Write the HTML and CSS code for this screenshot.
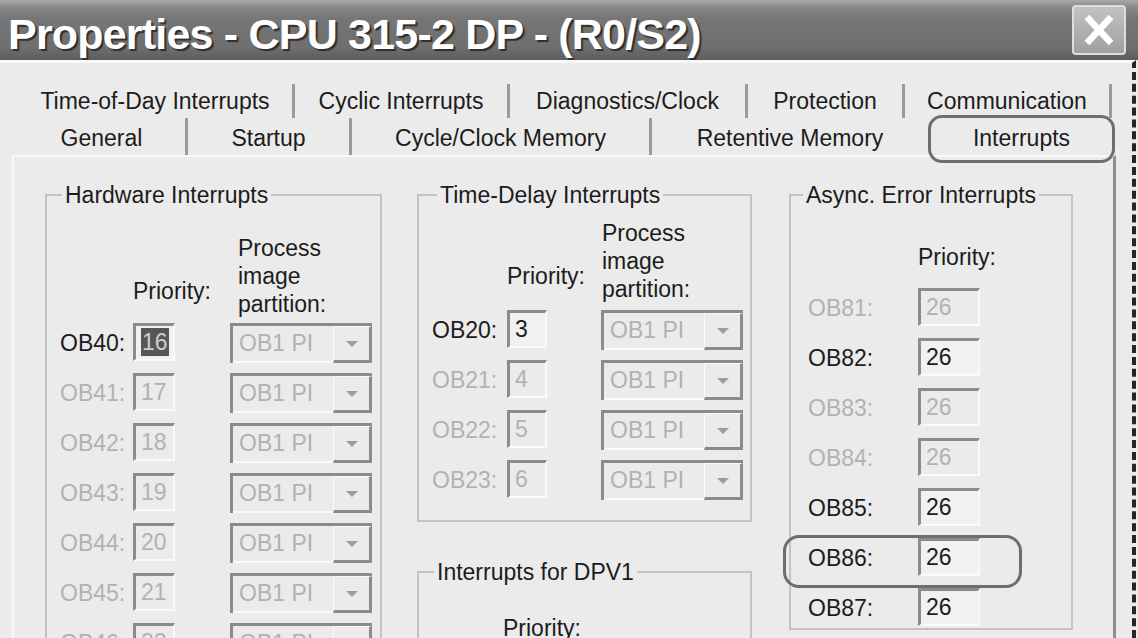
FILE: index.html
```html
<!DOCTYPE html>
<html lang="en">
<head>
  <meta charset="UTF-8" />
  <title>Properties - CPU 315-2 DP - (R0/S2)</title>
  <link rel="stylesheet" href="styles.css">
</head>
<body>
  <div id="window">
    <div id="titlebar">
      <h1>Properties - CPU 315-2 DP - (R0/S2)</h1>
      <button id="close-btn" aria-label="Close">
        <svg viewBox="0 0 30 32" width="30" height="32">
          <path d="M3 3 L27 29 M27 3 L3 29" stroke="#fff" stroke-width="6.5" fill="none" />
        </svg>
      </button>
    </div>

    <div id="client">
      <div class="tab-row back">
        <div class="tab t-tod">Time-of-Day Interrupts</div>
        <div class="tab t-cyclic">Cyclic Interrupts</div>
        <div class="tab t-diag">Diagnostics/Clock</div>
        <div class="tab t-prot">Protection</div>
        <div class="tab t-comm">Communication</div>
      </div>
      <div class="tab-row front">
        <div class="tab t-general">General</div>
        <div class="tab t-startup">Startup</div>
        <div class="tab t-cycle">Cycle/Clock Memory</div>
        <div class="tab t-retentive">Retentive Memory</div>
        <div class="tab t-interrupts active">Interrupts</div>
      </div>

      <div id="panel">
        <!-- left column -->
        <fieldset class="group group-hw">
          <legend>Hardware Interrupts</legend>
          <div class="group-body">
            <div class="head">
              <span class="head-prio">Priority:</span>
              <span class="head-pi">Process<br>image<br>partition:</span>
            </div>
            <div class="ob-row">
              <span class="ob-name">OB40:</span>
              <span class="field"><span class="sel">16</span></span>
              <span class="combo"><span class="combo-text">OB1 PI</span><span class="combo-btn"></span></span>
            </div>
            <div class="ob-row off">
              <span class="ob-name">OB41:</span>
              <span class="field">17</span>
              <span class="combo"><span class="combo-text">OB1 PI</span><span class="combo-btn"></span></span>
            </div>
            <div class="ob-row off">
              <span class="ob-name">OB42:</span>
              <span class="field">18</span>
              <span class="combo"><span class="combo-text">OB1 PI</span><span class="combo-btn"></span></span>
            </div>
            <div class="ob-row off">
              <span class="ob-name">OB43:</span>
              <span class="field">19</span>
              <span class="combo"><span class="combo-text">OB1 PI</span><span class="combo-btn"></span></span>
            </div>
            <div class="ob-row off">
              <span class="ob-name">OB44:</span>
              <span class="field">20</span>
              <span class="combo"><span class="combo-text">OB1 PI</span><span class="combo-btn"></span></span>
            </div>
            <div class="ob-row off">
              <span class="ob-name">OB45:</span>
              <span class="field">21</span>
              <span class="combo"><span class="combo-text">OB1 PI</span><span class="combo-btn"></span></span>
            </div>
            <div class="ob-row off">
              <span class="ob-name">OB46:</span>
              <span class="field">22</span>
              <span class="combo"><span class="combo-text">OB1 PI</span><span class="combo-btn"></span></span>
            </div>
          </div>
        </fieldset>

        <!-- middle column -->
        <div class="col-mid">
          <fieldset class="group group-delay">
            <legend>Time-Delay Interrupts</legend>
            <div class="group-body">
              <div class="head">
                <span class="head-prio">Priority:</span>
                <span class="head-pi">Process<br>image<br>partition:</span>
              </div>
              <div class="ob-row">
                <span class="ob-name">OB20:</span>
                <span class="field">3</span>
                <span class="combo"><span class="combo-text">OB1 PI</span><span class="combo-btn"></span></span>
              </div>
              <div class="ob-row off">
                <span class="ob-name">OB21:</span>
                <span class="field">4</span>
                <span class="combo"><span class="combo-text">OB1 PI</span><span class="combo-btn"></span></span>
              </div>
              <div class="ob-row off">
                <span class="ob-name">OB22:</span>
                <span class="field">5</span>
                <span class="combo"><span class="combo-text">OB1 PI</span><span class="combo-btn"></span></span>
              </div>
              <div class="ob-row off">
                <span class="ob-name">OB23:</span>
                <span class="field">6</span>
                <span class="combo"><span class="combo-text">OB1 PI</span><span class="combo-btn"></span></span>
              </div>
            </div>
          </fieldset>

          <fieldset class="group group-dpv1">
            <legend>Interrupts for DPV1</legend>
            <div class="group-body">
              <div class="head">
                <span class="head-prio">Priority:</span>
              </div>
            </div>
          </fieldset>
        </div>

        <!-- right column -->
        <fieldset class="group group-async">
          <legend>Async. Error Interrupts</legend>
          <div class="group-body">
            <div class="head">
              <span class="head-prio">Priority:</span>
            </div>
            <div class="ob-row off">
              <span class="ob-name">OB81:</span>
              <span class="field">26</span>
            </div>
            <div class="ob-row">
              <span class="ob-name">OB82:</span>
              <span class="field">26</span>
            </div>
            <div class="ob-row off">
              <span class="ob-name">OB83:</span>
              <span class="field">26</span>
            </div>
            <div class="ob-row off">
              <span class="ob-name">OB84:</span>
              <span class="field">26</span>
            </div>
            <div class="ob-row">
              <span class="ob-name">OB85:</span>
              <span class="field">26</span>
            </div>
            <div class="ob-row marked">
              <span class="ob-name">OB86:</span>
              <span class="field">26</span>
            </div>
            <div class="ob-row">
              <span class="ob-name">OB87:</span>
              <span class="field">26</span>
            </div>
          </div>
        </fieldset>
      </div>
    </div>
  </div>
</body>
</html>
```

FILE: styles.css
```css
* {
  box-sizing: border-box;
}

body {
  margin: 0;
  background: #ebebeb;
  color: #1c1c1c;
  font-family: 'Liberation Sans', Arial, sans-serif;
  font-size: 23px;
  overflow: hidden;
}

#window {
  width: 1138px;
  height: 638px;
  display: flex;
  flex-direction: column;
  overflow: hidden;
}

/* title bar */

#titlebar {
  flex: none;
  height: 60px;
  display: flex;
  justify-content: space-between;
  align-items: flex-start;
  background: linear-gradient(#a9a9a9 0, #8a8a8a 7px, #767676 18px, #6e6e6e 48px, #5c5c5c 60px);
}

#titlebar h1 {
  margin: 0;
  padding: 8px 0 0 8px;
  font-size: 43px;
  line-height: 52px;
  letter-spacing: -0.8px;
  color: #fff;
  text-shadow: 2px 2px 1px #2e2e2e;
  white-space: nowrap;
}

#close-btn {
  width: 54px;
  height: 50px;
  margin: 5px 12px 0 0;
  padding: 0;
  display: flex;
  align-items: center;
  justify-content: center;
  border: 2px solid #dedede;
  border-radius: 4px;
  background: linear-gradient(#c2c2c2, #a0a0a0);
}

/* dialog body */

#client {
  flex: 1;
  min-height: 0;
  display: flex;
  flex-direction: column;
  margin-right: 2px;
  padding: 21px 16px 0 12px;
  border-top: 3px solid #f7f7f7;
  border-right: 4px dashed #262626;
}

.tab-row {
  display: flex;
  padding-left: 6px;
  flex: none;
}

.tab-row.back {
  height: 34px;
}

.tab-row.front {
  height: 37px;
}

.tab {
  text-align: center;
  white-space: nowrap;
  line-height: 34px;
  border-right: 3px solid #9b9b9b;
}

.tab-row.front .tab {
  line-height: 40px;
}

.t-tod { width: 277px; }
.t-cyclic { width: 215px; }
.t-diag { width: 238px; }
.t-prot { width: 157px; }
.t-comm { width: 207px; }

.t-general { width: 170px; }
.t-startup { width: 164px; }
.t-cycle { width: 300px; }
.t-retentive { width: 276px; border-right: none; }
.t-interrupts { width: 187px; }

.tab.active {
  position: relative;
  border-right: none;
  line-height: 36px;
}

.tab.active::after {
  content: '';
  position: absolute;
  inset: -3px 0 -8px 0;
  border: 3px solid #6e6e6e;
  border-radius: 14px;
}

#panel {
  flex: 1;
  min-height: 0;
  display: flex;
  align-items: flex-start;
  padding: 24px 0 0 31px;
  border-top: 2px solid #f8f8f8;
  border-left: 2px solid #f8f8f8;
  border-right: 3px solid #8e8e8e;
  overflow: hidden;
}

/* group boxes */

.group {
  margin: 0;
  padding: 0;
  min-width: 0;
  border: 2px solid #c3c3c3;
}

.group legend {
  margin-left: 15px;
  padding: 0 3px;
  line-height: 28px;
}

.group-hw {
  width: 337px;
  --pad: 13px;
  --label-w: 73px;
  --field-w: 42px;
  --gap: 55px;
  --pi-shift: 8px;
  --top: 25px;
  --first: 5px;
}

.col-mid {
  width: 335px;
  margin-left: 35px;
  display: flex;
  flex-direction: column;
}

.group-delay {
  --pad: 13px;
  --label-w: 75px;
  --field-w: 40px;
  --gap: 54px;
  --pi-shift: 1px;
  --top: 10px;
  --first: 7px;
}

.group-delay legend {
  margin-left: 18px;
}

.group-delay .group-body {
  padding-bottom: 20px;
}

.group-dpv1 {
  margin-top: 36px;
  --pad: 0px;
  --label-w: 84px;
  --field-w: 40px;
  --gap: 54px;
  --top: 28px;
}

.group-dpv1 .group-body {
  height: 120px;
}

.group-async {
  width: 284px;
  margin-left: 37px;
  --pad: 17px;
  --label-w: 110px;
  --field-w: 62px;
  --gap: 0px;
  --top: 34px;
  --first: 17px;
}

.group-async legend {
  margin-left: 12px;
}

.group-body {
  padding-left: var(--pad);
  padding-top: var(--top);
}

.head {
  display: flex;
  align-items: flex-end;
}

.head-prio {
  width: calc(var(--field-w) + var(--gap));
  margin-left: var(--label-w);
  margin-bottom: 13px;
  line-height: 28px;
  white-space: nowrap;
}

.head-pi {
  padding-left: var(--pi-shift);
  line-height: 28px;
}

.group-async .head-prio,
.group-dpv1 .head-prio {
  margin-bottom: 0;
}

/* rows */

.ob-row {
  display: flex;
  align-items: flex-start;
  height: 40px;
  margin-top: 10px;
}

.head + .ob-row {
  margin-top: var(--first);
}

.ob-name {
  width: var(--label-w);
  align-self: center;
}

.field {
  width: var(--field-w);
  height: 38px;
  padding-left: 5px;
  line-height: 33px;
  background: #f1f1f1;
  border-top: 3px solid #8b8b8b;
  border-left: 3px solid #8b8b8b;
  border-right: 2px solid #fafafa;
  border-bottom: 2px solid #fafafa;
}

.sel {
  display: inline-block;
  margin-top: 2px;
  padding: 0 1px;
  line-height: 28px;
  vertical-align: top;
  background: #565656;
  color: #cdcdcd;
}

.ob-row.off .ob-name,
.ob-row.off .field {
  color: #b2b2b2;
}

.ob-row.off .field {
  background: #ebebeb;
}

.combo {
  display: flex;
  width: 142px;
  height: 40px;
  margin-left: var(--gap);
  color: #b2b2b2;
  border-top: 3px solid #8b8b8b;
  border-left: 3px solid #8b8b8b;
}

.combo-text {
  flex: 1;
  padding-left: 6px;
  line-height: 35px;
  border-bottom: 2px solid #fafafa;
}

.combo-btn {
  width: 39px;
  display: flex;
  align-items: center;
  justify-content: center;
  border: 1px solid #fafafa;
  border-right: 3px solid #8b8b8b;
  border-bottom: 3px solid #8b8b8b;
}

.combo-btn::after {
  content: '';
  border-left: 6px solid transparent;
  border-right: 6px solid transparent;
  border-top: 6px solid #9d9d9d;
}

.ob-row.marked {
  position: relative;
}

.ob-row.marked::after {
  content: '';
  position: absolute;
  inset: -3px 49px -10px -25px;
  border: 3px solid #6e6e6e;
  border-radius: 16px;
}
```
